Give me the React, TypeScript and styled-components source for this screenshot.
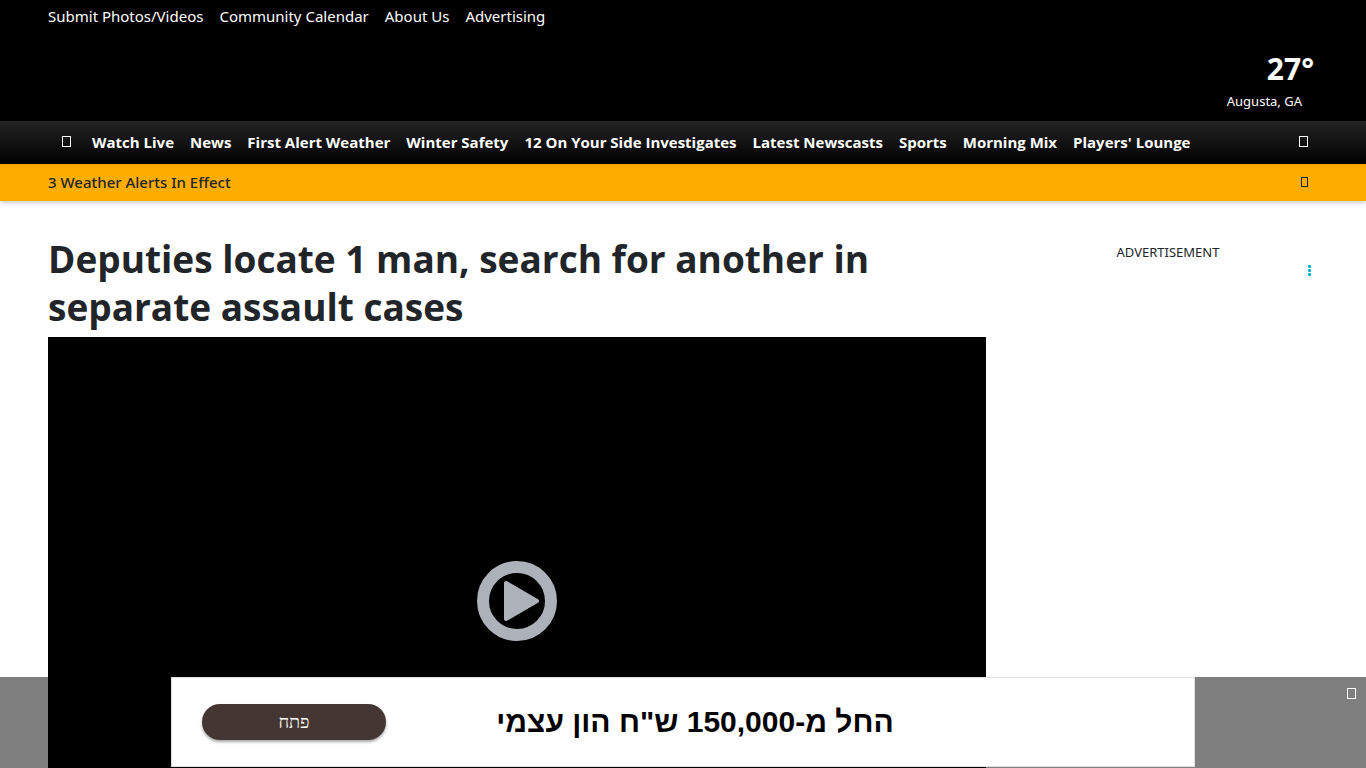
import React from "react";
import styled, { createGlobalStyle } from "styled-components";

const GlobalStyle = createGlobalStyle`
  *, *::before, *::after { box-sizing: border-box; }
  body {
    margin: 0;
    background: #fff;
    color: #212529;
    font-family: "Segoe UI", "Noto Sans", "Open Sans", sans-serif;
    font-size: 15px;
    line-height: 24px;
  }
`;

const Header = styled.header`
  background: #000;
  color: #fff;
`;

const TopLinks = styled.nav`
  display: flex;
  gap: 16px;
  padding: 4px 48px;
`;

const TextLink = styled.a<{ $bold?: boolean }>`
  color: inherit;
  text-decoration: none;
  white-space: nowrap;
  font-family: ${(p) => (p.$bold ? '"Segoe UI", "Open Sans", sans-serif' : "inherit")};
  font-weight: ${(p) => (p.$bold ? 700 : 400)};
`;

const Weather = styled.div`
  display: flex;
  flex-direction: column;
  align-items: flex-end;
  padding: 15px 52px 9px;
`;

const Temperature = styled.div`
  font-family: "Segoe UI", "Open Sans", sans-serif;
  font-size: 30px;
  font-weight: 700;
  line-height: 44px;
`;

const City = styled.div`
  padding-right: 12px;
  font-size: 13px;
  line-height: 21px;
`;

const MainNav = styled.nav`
  display: flex;
  align-items: center;
  gap: 16px;
  height: 43px;
  padding: 0 53px 2px 57px;
  background: linear-gradient(#242424, #000);
  color: #fff;
`;

const GlyphButton = styled.button<{ $push?: boolean }>`
  display: flex;
  align-items: center;
  justify-content: center;
  width: 19px;
  height: 24px;
  margin-left: ${(p) => (p.$push ? "auto" : "0")};
  padding: 0;
  border: 0;
  background: none;
  color: inherit;
`;

const Glyph = styled.span<{ $small?: boolean }>`
  width: ${(p) => (p.$small ? 7 : 9)}px;
  height: ${(p) => (p.$small ? 10 : 11)}px;
  border: 1px solid currentColor;
`;

const AlertBar = styled.section`
  display: flex;
  align-items: center;
  justify-content: space-between;
  height: 37px;
  padding: 0 52px 1px 48px;
  background: linear-gradient(#f5a300, #ffae00 5px);
  box-shadow: 0 2px 5px rgba(0, 0, 0, 0.2);
  font-weight: 500;
`;

const Page = styled.main`
  display: flex;
  gap: 32px;
  padding: 34px 48px 48px;
`;

const Article = styled.article`
  flex: 1;
  min-width: 0;
`;

const Headline = styled.h1`
  margin: 0 0 6px;
  font-family: "Segoe UI", "Open Sans", sans-serif;
  font-size: 37px;
  font-weight: 700;
  line-height: 48px;
`;

const Player = styled.div`
  display: flex;
  align-items: center;
  justify-content: center;
  aspect-ratio: 16 / 9;
  background: #000;
`;

const PlayButton = styled.button`
  display: flex;
  padding: 0;
  border: 0;
  background: none;
`;

const Sidebar = styled.aside`
  display: flex;
  flex: 0 0 300px;
  flex-direction: column;
  padding: 5px 0;
`;

const AdLabel = styled.div`
  text-align: center;
  font-size: 13px;
  line-height: 24px;
`;

const AdMenu = styled.button`
  align-self: flex-end;
  display: flex;
  padding: 1px 6px;
  border: 0;
  background: none;
`;

const Sticky = styled.div`
  position: fixed;
  right: 0;
  bottom: 0;
  left: 0;
  display: flex;
  justify-content: center;
  height: 91px;
  padding-bottom: 1px;
  background: rgba(0, 0, 0, 0.5);
`;

const Banner = styled.section`
  display: flex;
  align-items: center;
  width: 100%;
  max-width: 1024px;
  padding: 0 30px;
  border: 1px solid #dfdfdf;
  background: #fff;
  color: #000;
`;

const BannerButton = styled.button`
  flex: 0 0 184px;
  height: 36px;
  border: 0;
  border-radius: 18px;
  background: #443632;
  box-shadow: 0 2px 3px rgba(0, 0, 0, 0.35);
  color: #fff;
  font-family: "Liberation Serif", serif;
  font-size: 18px;
  line-height: 24px;
`;

const BannerText = styled.div`
  flex: 1;
  padding-right: 160px;
  font-family: "Liberation Sans", sans-serif;
  font-size: 30px;
  font-weight: 700;
  line-height: 36px;
  text-align: center;
  white-space: nowrap;
`;

const CloseButton = styled(GlyphButton)`
  position: absolute;
  top: 4px;
  right: 5px;
  color: #fff;
`;

const topLinks = ["Submit Photos/Videos", "Community Calendar", "About Us", "Advertising"];
const sections = [
  "Watch Live",
  "News",
  "First Alert Weather",
  "Winter Safety",
  "12 On Your Side Investigates",
  "Latest Newscasts",
  "Sports",
  "Morning Mix",
  "Players' Lounge",
];

export default function App() {
  return (
    <>
      <GlobalStyle />
      <Header>
        <TopLinks aria-label="Station">
          {topLinks.map((label) => (
            <TextLink key={label} href="#">{label}</TextLink>
          ))}
        </TopLinks>
        <Weather>
          <Temperature>27°</Temperature>
          <City>Augusta, GA</City>
        </Weather>
        <MainNav aria-label="Sections">
          <GlyphButton aria-label="Menu"><Glyph /></GlyphButton>
          {sections.map((label) => (
            <TextLink key={label} href="#" $bold>{label}</TextLink>
          ))}
          <GlyphButton aria-label="Search" $push><Glyph /></GlyphButton>
        </MainNav>
      </Header>
      <AlertBar>
        <span>3 Weather Alerts In Effect</span>
        <GlyphButton aria-label="Expand alerts"><Glyph $small /></GlyphButton>
      </AlertBar>
      <Page>
        <Article>
          <Headline>Deputies locate 1 man, search for another in separate assault cases</Headline>
          <Player>
            <PlayButton aria-label="Play video">
              <svg width="80" height="80" viewBox="0 0 80 80">
                <circle cx="40" cy="40" r="34" fill="none" stroke="#adb1b9" strokeWidth="12" />
                <path d="M29 22 L60 40 L29 58 Z" fill="#adb1b9" stroke="#adb1b9" strokeWidth="4" strokeLinejoin="round" />
              </svg>
            </PlayButton>
          </Player>
        </Article>
        <Sidebar>
          <AdLabel>ADVERTISEMENT</AdLabel>
          <AdMenu aria-label="Ad options">
            <svg width="5" height="12" viewBox="0 0 5 12" fill="#00aecd">
              <rect x="1" y="0" width="3" height="3" rx="1" />
              <rect x="1" y="4" width="3" height="3" rx="1" />
              <rect x="1" y="8" width="3" height="3" rx="1" />
            </svg>
          </AdMenu>
        </Sidebar>
      </Page>
      <Sticky>
        <Banner lang="he">
          <BannerButton>פתח</BannerButton>
          <BannerText dir="rtl">החל מ-150,000 ש"ח הון עצמי</BannerText>
        </Banner>
        <CloseButton aria-label="Close ad"><Glyph /></CloseButton>
      </Sticky>
    </>
  );
}
